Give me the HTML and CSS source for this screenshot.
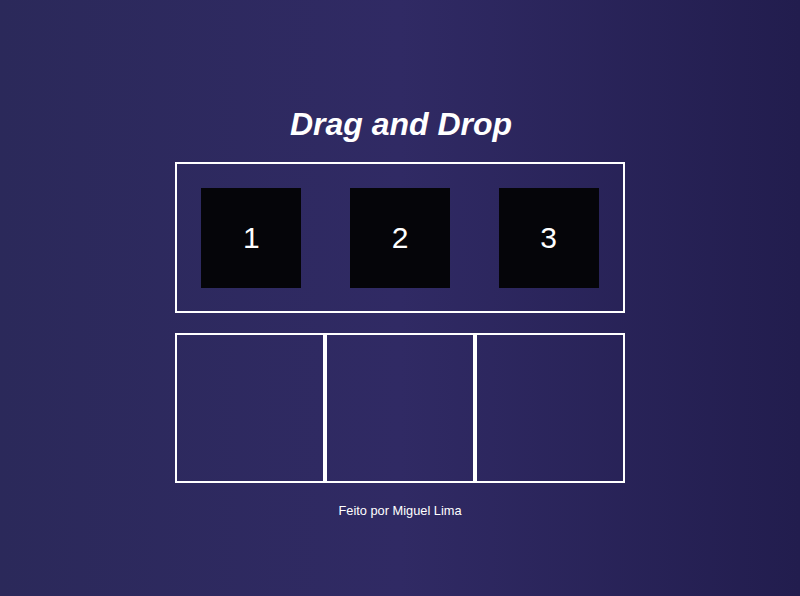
FILE: index.html
```html
<!DOCTYPE html>
<html lang="pt">
<head>
<meta charset="utf-8">
<title>Drag and Drop</title>
<link rel="stylesheet" href="styles.css">
</head>
<body>
<main class="page">
  <h1 class="title">Drag and Drop</h1>
  <div class="source">
    <div class="item" draggable="true">1</div>
    <div class="item" draggable="true">2</div>
    <div class="item" draggable="true">3</div>
  </div>
  <div class="targets">
    <div class="slot"></div>
    <div class="slot"></div>
    <div class="slot"></div>
  </div>
  <footer class="credit">Feito por Miguel Lima</footer>
</main>
</body>
</html>
```
FILE: styles.css
```css
html, body {
  margin: 0;
  height: 100%;
}
body {
  background: linear-gradient(to right, #2b295a 0%, #302a64 50%, #221d4e 100%);
  font-family: "Liberation Sans", Arial, sans-serif;
  color: #ffffff;
}
.page {
  display: flex;
  flex-direction: column;
  align-items: center;
  padding-top: 106px;
}
.title {
  margin: 0 0 19px 2px;
  font-size: 32px;
  font-weight: bold;
  font-style: italic;
  line-height: 37px;
}
.source {
  box-sizing: border-box;
  width: 450px;
  height: 151px;
  border: 2px solid #ffffff;
  display: flex;
  justify-content: space-around;
  align-items: center;
}
.item {
  width: 100px;
  height: 100px;
  background: #050509;
  display: flex;
  align-items: center;
  justify-content: center;
  font-size: 30px;
}
.targets {
  margin-top: 20px;
  display: flex;
}
.slot {
  box-sizing: border-box;
  width: 150px;
  height: 150px;
  border: 2px solid #ffffff;
}
.credit {
  margin-top: 20px;
  font-size: 12.8px;
  line-height: 15px;
}
```
